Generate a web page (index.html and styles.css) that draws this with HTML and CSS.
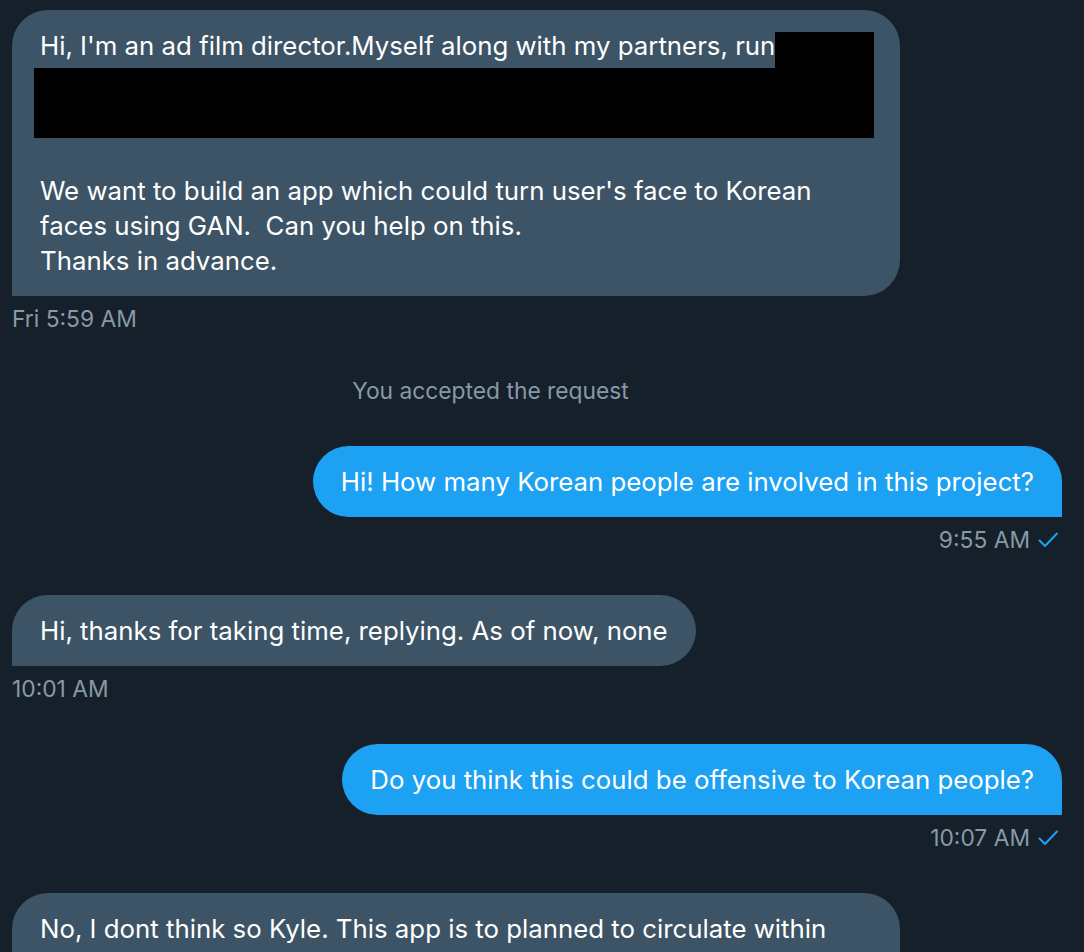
FILE: index.html
```html
<!DOCTYPE html>
<html lang="en">
<head>
<meta charset="utf-8">
<title>Messages</title>
<link rel="stylesheet" href="styles.css">
</head>
<body>
<main class="chat">
  <div class="msg in">
    <div class="bubble">
      <div class="first-line"><span>Hi, I'm an ad film director.Myself along with my partners, run</span><span class="redact redact-inline"></span></div>
      <div class="redact redact-block"></div>
      <p class="gap-line">&nbsp;</p>
      <p>We want to build an app which could turn user's face to Korean faces using GAN.&nbsp; Can you help on this.<br>Thanks in advance.</p>
    </div>
    <div class="time">Fri 5:59 AM</div>
  </div>

  <div class="system">You accepted the request</div>

  <div class="msg out">
    <div class="bubble">Hi! How many Korean people are involved in this project?</div>
    <div class="time">9:55 AM <svg class="check" viewBox="0 0 24 24" width="24" height="24"><path d="M3.5 12.5 L9 18 L21 5.5" /></svg></div>
  </div>

  <div class="msg in">
    <div class="bubble">Hi, thanks for taking time, replying. As of now, none</div>
    <div class="time">10:01 AM</div>
  </div>

  <div class="msg out">
    <div class="bubble">Do you think this could be offensive to Korean people?</div>
    <div class="time">10:07 AM <svg class="check" viewBox="0 0 24 24" width="24" height="24"><path d="M3.5 12.5 L9 18 L21 5.5" /></svg></div>
  </div>

  <div class="msg in">
    <div class="bubble bubble-last">No, I dont think so Kyle. This app is to planned to circulate within</div>
  </div>
</main>
</body>
</html>
```

FILE: styles.css
```css
html, body {
  margin: 0;
  padding: 0;
  background: #15202b;
}

body {
  font-family: Inter, "Noto Sans", "Liberation Sans", sans-serif;
  color: #ffffff;
  overflow: hidden;
  height: 952px;
}

.chat {
  display: flex;
  flex-direction: column;
  padding: 10px 22px 0 12px;
}

.msg {
  display: flex;
  flex-direction: column;
  margin-bottom: 43px;
}

.msg.in {
  align-items: flex-start;
}

.msg.out {
  align-items: flex-end;
}

.bubble {
  font-size: 25.8px;
  line-height: 35px;
  padding: 18px 28px 18px 28px;
  border-radius: 36px;
  max-width: 888px;
  box-sizing: border-box;
}

.bubble-last {
  width: 888px;
  padding-bottom: 40px;
}

.msg.in .bubble {
  background: #3d5466;
  border-bottom-left-radius: 0;
}

.msg.out .bubble {
  background: #1da1f2;
  border-bottom-right-radius: 0;
}

.bubble p {
  margin: 0;
}

.first-line {
  display: flex;
  align-items: flex-start;
}

.redact {
  background: #000000;
}

.redact-inline {
  flex: 1;
  height: 36px;
  margin-top: 4px;
  margin-right: -2px;
}

.redact-block {
  height: 70px;
  margin-left: -6px;
  margin-right: -2px;
}

.time {
  display: flex;
  align-items: center;
  gap: 6px;
  margin-top: 11px;
  font-size: 22.8px;
  line-height: 24px;
  color: #8899a6;
}

.msg.out .time {
  margin-right: 2px;
}

.check {
  width: 24px;
  height: 24px;
  fill: none;
  stroke: #1da1f2;
  stroke-width: 2;
  stroke-linecap: round;
  stroke-linejoin: round;
}

.system {
  align-self: flex-start;
  width: 957px;
  text-align: center;
  margin-top: 5px;
  margin-bottom: 43px;
  font-size: 22.8px;
  line-height: 24px;
  color: #8899a6;
}
```
